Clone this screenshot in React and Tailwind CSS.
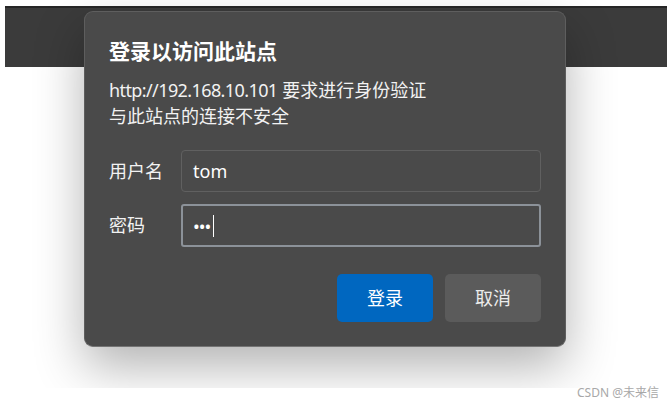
import React from "react";

const FONT = { fontFamily: '"Noto Sans", "Noto Sans CJK SC", sans-serif' };

export default function App() {
  return (
    <div className="relative w-[667px] h-[406px] bg-white overflow-hidden" style={FONT}>
      <div className="relative h-[388px] overflow-hidden bg-white">
        <div className="mt-[6px] ml-[5px] h-[61px] bg-[#3b3b3b] border-t-2 border-[#262626]" />

        {/* auth dialog */}
        <div className="absolute left-[84px] top-[11px] w-[482px] h-[336px] rounded-[9px] bg-[#4a4a4a] border border-[#5e5e5e] border-b-[#747474] shadow-[0_20px_50px_rgba(0,0,0,0.3)] px-[24px] pt-[24px]">
          <h1 className="text-[21px] leading-[30px] font-bold text-white">登录以访问此站点</h1>
          <div className="mt-[11px] text-[18px] leading-[26px] text-[#f2f2f2]">
            <p>
              <span className="tracking-[-0.6px]">http://192.168.10.101</span> 要求进行身份验证
            </p>
            <p>与此站点的连接不安全</p>
          </div>

          <div className="mt-[21px] flex flex-col gap-[12px]">
            <div className="flex items-center">
              <span className="w-[72px] text-[18px] text-[#f2f2f2]">用户名</span>
              <div className="flex-1 h-[42px] rounded-[4px] border border-[#606060] flex items-center px-[11px] text-[18px] text-white">
                tom
              </div>
            </div>
            <div className="flex items-center">
              <span className="w-[72px] text-[18px] text-[#f2f2f2]">密码</span>
              <div className="flex-1 h-[43px] rounded-[3px] border-2 border-[#8c9299] flex items-center px-[10px] text-white">
                <span className="text-[18px] tracking-[-1px] leading-none">•••</span>
                <span className="ml-[3px] w-[1px] h-[22px] bg-white" />
              </div>
            </div>
          </div>

          <div className="mt-[27px] flex justify-end gap-[12px]">
            <button className="w-[96px] h-[48px] rounded-[5px] bg-[#0067c0] text-[18px] text-white">登录</button>
            <button className="w-[96px] h-[48px] rounded-[5px] bg-[#5b5b5b] text-[18px] text-[#ececec]">取消</button>
          </div>
        </div>
      </div>

      <div className="absolute right-[8px] bottom-[4px] text-[12px] text-[#a8a8a8]">CSDN @未来信</div>
    </div>
  );
}
